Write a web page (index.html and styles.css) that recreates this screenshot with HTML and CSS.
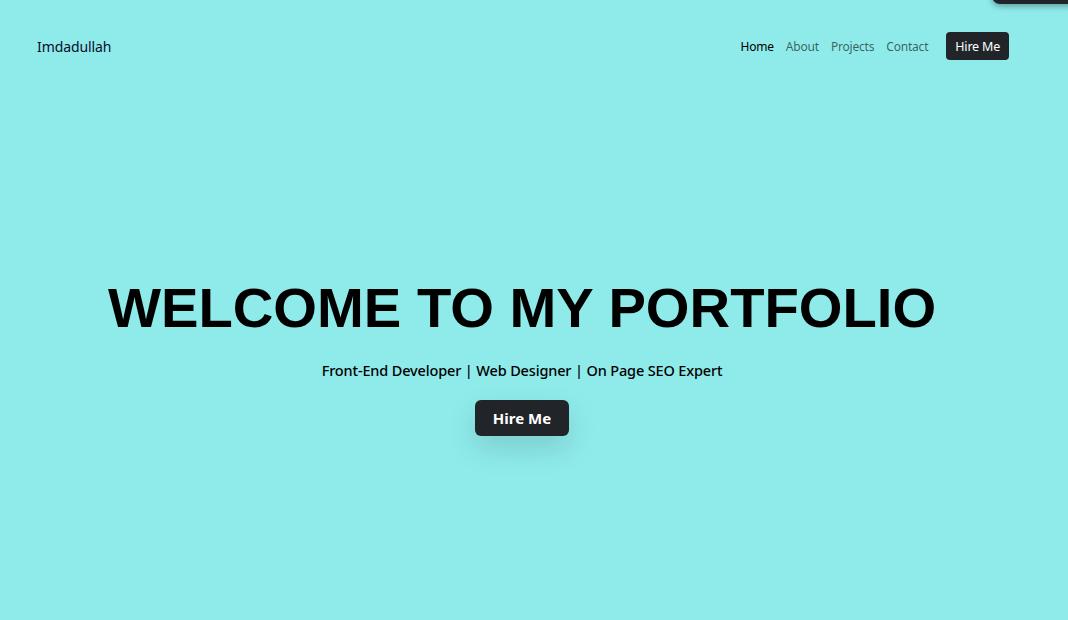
FILE: index.html
```html
<!DOCTYPE html>
<html lang="en">
<head>
<meta charset="utf-8">
<title>Imdadullah - Portfolio</title>
<link rel="stylesheet" href="styles.css">
</head>
<body>
<div class="toast"></div>
<header class="navbar">
  <a class="brand" href="#">Imdadullah</a>
  <nav class="menu">
    <a class="link active" href="#">Home</a>
    <a class="link" href="#">About</a>
    <a class="link" href="#">Projects</a>
    <a class="link" href="#">Contact</a>
    <a class="btn-small" href="#">Hire Me</a>
  </nav>
</header>
<main class="hero">
  <h1 class="title">WELCOME TO MY PORTFOLIO</h1>
  <p class="subtitle">Front-End Developer | Web Designer | On Page SEO Expert</p>
  <a class="btn-hero" href="#">Hire Me</a>
</main>
</body>
</html>
```
FILE: styles.css
```css
* { box-sizing: border-box; }
html, body {
  margin: 0;
  height: 100%;
}
body {
  background: #8eebea;
  font-family: "Noto Sans", "Open Sans", sans-serif;
  color: #000;
  overflow: hidden;
  position: relative;
}
a { text-decoration: none; }

.toast {
  position: absolute;
  top: -40px;
  right: -12px;
  width: 88px;
  height: 44px;
  background: #212529;
  border-radius: 8px;
  box-shadow: 0 2px 6px rgba(0,0,0,0.35);
}

.navbar {
  height: 92px;
  display: flex;
  align-items: center;
  justify-content: space-between;
  padding: 0 59px 0 37px;
}
.brand {
  font-size: 14px;
  letter-spacing: -0.1px;
  color: #0b0b2a;
}
.menu {
  display: flex;
  align-items: center;
  gap: 12px;
}
.link {
  font-size: 12px;
  letter-spacing: -0.2px;
  color: rgba(0,0,0,0.6);
}
.link.active { color: #000; }
.btn-small {
  margin-left: 6px;
  background: #212529;
  color: #fff;
  font-size: 12.5px;
  letter-spacing: -0.2px;
  height: 28px;
  padding: 0 9px;
  display: flex;
  align-items: center;
  border-radius: 4px;
}

.hero {
  display: flex;
  flex-direction: column;
  align-items: center;
  padding: 182px 24px 0 0;
}
.title {
  margin: 0;
  font-family: "Liberation Sans", Arial, sans-serif;
  font-weight: 700;
  font-size: 56.2px;
  line-height: 67px;
}
.subtitle {
  margin: 17px 0 0;
  font-size: 14.5px;
  letter-spacing: -0.15px;
  line-height: 24px;
  font-weight: 500;
}
.btn-hero {
  margin-top: 18px;
  height: 36px;
  padding: 0 18px;
  display: flex;
  align-items: center;
  background: #212529;
  color: #fff;
  font-weight: 700;
  font-size: 15px;
  border-radius: 6px;
  box-shadow: 0 12px 30px rgba(0,0,0,0.13);
}
```
